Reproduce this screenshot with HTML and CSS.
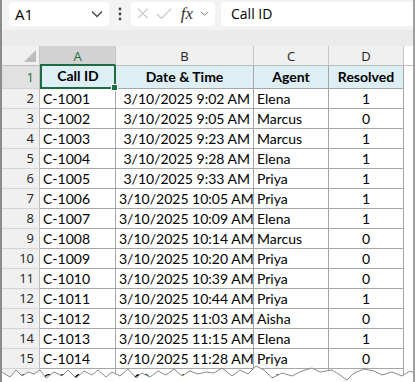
FILE: index.html
```html
<!DOCTYPE html>
<html lang="en">
<head>
  <meta charset="UTF-8">
  <meta name="viewport" content="width=device-width, initial-scale=1.0">
  <title>Call Log - Sheet</title>
  <link rel="stylesheet" href="styles.css">
</head>
<body>
  <div class="window">
    <div class="formula-bar">
      <div class="name-box">
        <span>A1</span>
        <svg class="chev" width="12" height="8" viewBox="0 0 12 8"><path d="M1 1.5 L6 6.5 L11 1.5" fill="none" stroke="#444" stroke-width="1.3"/></svg>
      </div>
      <div class="dots">
        <svg width="4" height="14" viewBox="0 0 4 14"><circle cx="2" cy="2" r="1.4" fill="#444"/><circle cx="2" cy="7" r="1.4" fill="#444"/><circle cx="2" cy="12" r="1.4" fill="#444"/></svg>
      </div>
      <div class="fx-box">
        <svg width="13" height="13" viewBox="0 0 13 13"><path d="M1 1 L12 12 M12 1 L1 12" stroke="#c2c2c2" stroke-width="1.2"/></svg>
        <svg width="18" height="13" viewBox="0 0 18 13"><path d="M1 7 L6 12 L17 1" fill="none" stroke="#c2c2c2" stroke-width="1.2"/></svg>
        <span class="fx">fx</span>
        <svg width="10" height="7" viewBox="0 0 10 7"><path d="M1 1.5 L5 5.5 L9 1.5" fill="none" stroke="#777" stroke-width="1.1"/></svg>
      </div>
      <div class="formula-input">Call ID</div>
    </div>
    <div class="band"></div>

    <div class="sheet" id="sheet"></div>

    <svg class="torn" width="415" height="22" viewBox="0 0 415 22">
      <polygon fill="#fff" points="0,12 8,17 14,10 20,16 26,12 32,14 38,10 44,18 52,12 60,16 66,10 74,18 82,11 90,15 96,10 104,17 110,12 118,16 126,9 134,18 140,13 148,17 156,11 164,15 172,9 180,16 188,11 196,14 204,12 212,13 220,8 230,16 238,10 246,14 254,6 262,10 270,18 280,13 290,16 300,11 310,8 318,12 330,10 338,15 345,20 352,13 362,9 372,11 380,15 390,12 400,16 408,11 415,14 415,22 0,22"/>
      <polyline fill="none" stroke="#8a8a8a" stroke-width="1" points="0,12 8,17 14,10 20,16 26,12 32,14 38,10 44,18 52,12 60,16 66,10 74,18 82,11 90,15 96,10 104,17 110,12 118,16 126,9 134,18 140,13 148,17 156,11 164,15 172,9 180,16 188,11 196,14 204,12 212,13 220,8 230,16 238,10 246,14 254,6 262,10 270,18 280,13 290,16 300,11 310,8 318,12 330,10 338,15 345,20 352,13 362,9 372,11 380,15 390,12 400,16 408,11 415,14"/>
    </svg>
  </div>

  <script>
    const rows = [
      ['C-1001', '3/10/2025 9:02 AM', 'Elena', 1],
      ['C-1002', '3/10/2025 9:05 AM', 'Marcus', 0],
      ['C-1003', '3/10/2025 9:23 AM', 'Marcus', 1],
      ['C-1004', '3/10/2025 9:28 AM', 'Elena', 1],
      ['C-1005', '3/10/2025 9:33 AM', 'Priya', 1],
      ['C-1006', '3/10/2025 10:05 AM', 'Priya', 1],
      ['C-1007', '3/10/2025 10:09 AM', 'Elena', 1],
      ['C-1008', '3/10/2025 10:14 AM', 'Marcus', 0],
      ['C-1009', '3/10/2025 10:20 AM', 'Priya', 0],
      ['C-1010', '3/10/2025 10:39 AM', 'Priya', 0],
      ['C-1011', '3/10/2025 10:44 AM', 'Priya', 1],
      ['C-1012', '3/10/2025 11:03 AM', 'Aisha', 0],
      ['C-1013', '3/10/2025 11:15 AM', 'Elena', 1],
      ['C-1014', '3/10/2025 11:28 AM', 'Priya', 0],
      ['C-1015', '3/10/2025 11:36 AM', 'Aisha', 1]
    ];

    function cell(cls, text) {
      const div = document.createElement('div');
      div.className = cls;
      div.textContent = text;
      return div;
    }

    function renderSheet() {
      const sheet = document.getElementById('sheet');

      sheet.appendChild(cell('corner', ''));
      ['A', 'B', 'C', 'D'].forEach(letter => {
        sheet.appendChild(cell('col-head' + (letter === 'A' ? ' active' : ''), letter));
      });
      sheet.appendChild(cell('col-head rest', ''));

      sheet.appendChild(cell('row-head active', '1'));
      const first = cell('title sel', 'Call ID');
      first.appendChild(cell('handle', ''));
      sheet.appendChild(first);
      ['Date & Time', 'Agent', 'Resolved'].forEach(t => sheet.appendChild(cell('title', t)));
      sheet.appendChild(cell('rest', ''));

      rows.forEach((r, i) => {
        sheet.appendChild(cell('row-head', i + 2));
        sheet.appendChild(cell('c left', r[0]));
        sheet.appendChild(cell('c right', r[1]));
        sheet.appendChild(cell('c left', r[2]));
        sheet.appendChild(cell('c center', r[3]));
        sheet.appendChild(cell('rest', ''));
      });
    }

    renderSheet();
  </script>
</body>
</html>
```

FILE: styles.css
```css
body {
  margin: 0;
  background-color: #fff;
  font-family: 'Open Sans', 'Noto Sans', sans-serif;
  color: #000;
}
.window {
  position: relative;
  width: 415px;
  height: 382px;
  overflow: hidden;
  box-sizing: border-box;
  border-left: 2px solid #8c8c8c;
  border-right: 2px solid #a0a0a0;
}
.formula-bar {
  display: flex;
  align-items: center;
  height: 30px;
  padding: 0 0 3px 7px;
  box-sizing: border-box;
  background-color: #f3f3f3;
}
.name-box {
  display: flex;
  align-items: center;
  justify-content: space-between;
  width: 100px;
  height: 24px;
  padding: 0 6px 0 6px;
  box-sizing: border-box;
  background-color: #fff;
  border-radius: 4px;
  font-size: 15px;
}
.dots {
  display: flex;
  align-items: center;
  width: 22px;
  justify-content: center;
}
.fx-box {
  display: flex;
  align-items: center;
  gap: 7px;
  width: 84px;
  height: 24px;
  padding: 0 6px;
  box-sizing: border-box;
  background-color: #fff;
  border-radius: 4px;
}
.fx {
  font-family: 'Liberation Serif', serif;
  font-style: italic;
  font-size: 17px;
  color: #333;
  margin-left: 2px;
}
.formula-input {
  flex: 1;
  height: 24px;
  margin-left: 6px;
  padding-left: 10px;
  line-height: 24px;
  background-color: #fff;
  border-radius: 4px 0 0 4px;
  font-size: 14px;
}
.band {
  height: 16px;
  background-color: #ebebeb;
}
.sheet {
  display: grid;
  grid-template-columns: 38px 76px 138px 75px 75px 1fr;
  grid-template-rows: 20px 23px;
  grid-auto-rows: 20px;
  font-family: 'Lato', sans-serif;
  font-size: 14px;
}
.sheet > div {
  box-sizing: border-box;
  white-space: nowrap;
  overflow: hidden;
}
.corner {
  position: relative;
  background-color: #f0f0f0;
  border-right: 1px solid #c6c6c6;
  border-bottom: 1px solid #bdbdbd;
}
.corner::after {
  content: '';
  position: absolute;
  right: 3px;
  bottom: 3px;
  border-style: solid;
  border-width: 0 0 12px 12px;
  border-color: transparent transparent #bcbcbc transparent;
}
.col-head {
  background-color: #f0f0f0;
  border-right: 1px solid #c6c6c6;
  border-bottom: 1px solid #bdbdbd;
  text-align: center;
  font-family: 'Open Sans', sans-serif;
  font-size: 13px;
  line-height: 20px;
  color: #222;
}
.col-head.active {
  background-color: #d2d2d2;
  color: #1e6c41;
  border-bottom: 2px solid #1e6c41;
}
.col-head.rest {
  border-right: none;
}
.row-head {
  background-color: #f0f0f0;
  border-right: 1px solid #bdbdbd;
  border-bottom: 1px solid #d4d4d4;
  text-align: right;
  padding-right: 5px;
  font-family: 'Open Sans', sans-serif;
  font-size: 13px;
  line-height: 19px;
  color: #222;
}
.row-head.active {
  background-color: #e1e1e1;
  color: #1e6c41;
  line-height: 22px;
}
.title {
  background-color: #ddeef5;
  border-right: 1px solid #a6a6a6;
  border-bottom: 1px solid #a6a6a6;
  text-align: center;
  font-weight: bold;
  line-height: 22px;
}
.title.sel {
  position: relative;
  overflow: visible;
  border: 2px solid #1e6c41;
  border-top: none;
  line-height: 20px;
}
.handle {
  position: absolute;
  right: -4px;
  bottom: -4px;
  width: 5px;
  height: 5px;
  background-color: #1e6c41;
  border: 1px solid #fff;
}
.c {
  border-right: 1px solid #a6a6a6;
  border-bottom: 1px solid #a6a6a6;
  line-height: 19px;
  padding: 0 3px;
}
.left {
  text-align: left;
}
.right {
  text-align: right;
}
.center {
  text-align: center;
}
.rest {
  background-color: #fff;
}
.torn {
  position: absolute;
  left: 0;
  bottom: 0;
}
```
